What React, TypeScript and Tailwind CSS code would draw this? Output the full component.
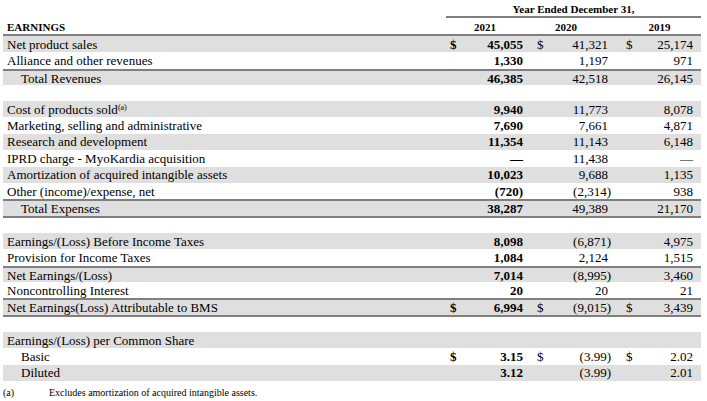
import clsx from 'clsx';

type Val = { v: string; d?: boolean };
type RowData = {
  label: string;
  vals?: [Val, Val, Val];
  gray?: boolean;
  indent?: boolean;
  lineTop?: boolean;
  sup?: string;
};

const cols = [
  { pl: 'pl-[4px]', pr: 'pr-[7px]', bold: true, hang: false },
  { pl: 'pl-[7px]', pr: 'pr-[10px]', bold: false, hang: true },
  { pl: 'pl-[8px]', pr: 'pr-[8px]', bold: false, hang: true },
];

const v = (a: string, b: string, c: string, d = false): [Val, Val, Val] => [
  { v: a, d },
  { v: b, d },
  { v: c, d },
];

const revenues: RowData[] = [
  { label: 'Net product sales', vals: v('45,055', '41,321', '25,174', true), gray: true },
  { label: 'Alliance and other revenues', vals: v('1,330', '1,197', '971') },
  { label: 'Total Revenues', vals: v('46,385', '42,518', '26,145'), gray: true, indent: true, lineTop: true },
];

const expenses: RowData[] = [
  { label: 'Cost of products sold', sup: '(a)', vals: v('9,940', '11,773', '8,078'), gray: true },
  { label: 'Marketing, selling and administrative', vals: v('7,690', '7,661', '4,871') },
  { label: 'Research and development', vals: v('11,354', '11,143', '6,148'), gray: true },
  { label: 'IPRD charge - MyoKardia acquisition', vals: v('—', '11,438', '—') },
  { label: 'Amortization of acquired intangible assets', vals: v('10,023', '9,688', '1,135'), gray: true },
  { label: 'Other (income)/expense, net', vals: v('(720)', '(2,314)', '938') },
  { label: 'Total Expenses', vals: v('38,287', '49,389', '21,170'), gray: true, indent: true, lineTop: true },
];

const earnings: RowData[] = [
  { label: 'Earnings/(Loss) Before Income Taxes', vals: v('8,098', '(6,871)', '4,975'), gray: true },
  { label: 'Provision for Income Taxes', vals: v('1,084', '2,124', '1,515') },
  { label: 'Net Earnings/(Loss)', vals: v('7,014', '(8,995)', '3,460'), gray: true, lineTop: true },
  { label: 'Noncontrolling Interest', vals: v('20', '20', '21') },
  { label: 'Net Earnings(Loss) Attributable to BMS', vals: v('6,994', '(9,015)', '3,439', true), gray: true, lineTop: true },
];

const perShare: RowData[] = [
  { label: 'Earnings/(Loss) per Common Share', gray: true },
  { label: 'Basic', vals: v('3.15', '(3.99)', '2.02', true), indent: true },
  { label: 'Diluted', vals: v('3.12', '(3.99)', '2.01'), gray: true, indent: true },
];

function Row({ row }: { row: RowData }) {
  return (
    <div
      className={clsx(
        'grid grid-cols-[443px_84px_88px_83px] h-[16.4px] items-center text-[13px] leading-[15px]',
        row.gray ? 'bg-[#dfdfdf]' : 'bg-white',
        row.lineTop && 'border-t-2 border-[#7f7f7f]'
      )}
    >
      <div className={row.indent ? 'pl-[18px]' : 'pl-[4px]'}>
        {row.label}
        {row.sup && <sup className="text-[8px]">{row.sup}</sup>}
      </div>
      {row.vals
        ? row.vals.map((val, i) => (
            <div key={i} className={clsx('flex justify-between', cols[i].pl, cols[i].pr, cols[i].bold && 'font-bold')}>
              <span>{val.d ? '$' : ''}</span>
              <span className={clsx(cols[i].hang && val.v.startsWith('(') && '-mr-[3px]')}>{val.v}</span>
            </div>
          ))
        : null}
    </div>
  );
}

function Line() {
  return <div className="h-[2px] bg-[#7f7f7f]" />;
}

export default function App() {
  return (
    <div className="w-[707px] h-[401px] bg-white text-black font-['Liberation_Serif',serif] overflow-hidden">
      <div className="ml-[3px] w-[698px]">
        <div className="grid grid-cols-[443px_84px_88px_83px] grid-rows-[18px_16px] text-[11px] font-bold">
          <div />
          <div className="col-span-3 border-b-2 border-[#7f7f7f] text-center leading-[18px]">Year Ended December 31,</div>
          <div className="pl-[4px] leading-[16px] pt-[1px]">EARNINGS</div>
          <div className="text-center pr-[6px] leading-[18px]">2021</div>
          <div className="text-center pr-[16px] leading-[18px]">2020</div>
          <div className="text-center leading-[18px]">2019</div>
        </div>
        <Line />
        {revenues.map((r) => (
          <Row key={r.label} row={r} />
        ))}

        <div className="mt-[15.8px]">
          {expenses.map((r) => (
            <Row key={r.label} row={r} />
          ))}
          <Line />
        </div>

        <div className="mt-[15.2px]">
          {earnings.map((r) => (
            <Row key={r.label} row={r} />
          ))}
          <Line />
        </div>

        <div className="mt-[15px]">
          {perShare.map((r) => (
            <Row key={r.label} row={r} />
          ))}
        </div>

        <div className="mt-[4px] flex text-[10px] leading-[16px]">
          <span className="w-[46px]">(a)</span>
          <span>Excludes amortization of acquired intangible assets.</span>
        </div>
      </div>
    </div>
  );
}
